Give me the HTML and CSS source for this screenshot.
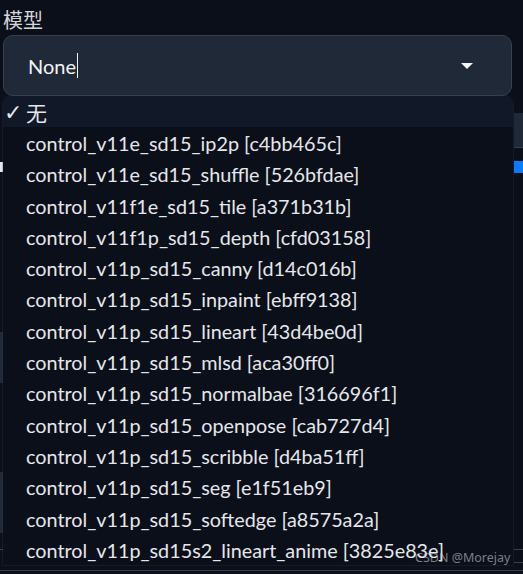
FILE: index.html
```html
<!DOCTYPE html>
<html lang="zh">
<head>
<meta charset="utf-8">
<link rel="stylesheet" href="styles.css">
</head>
<body>
<div class="page">
  <div class="field">
    <div class="label">模型</div>
    <div class="select">
      <span class="value">None</span><span class="caret"></span>
      <span class="arrow"></span>
    </div>
  </div>
  <div class="underlay">
    <div class="col col-left">
      <div class="u-check"></div>
      <div class="u-box u-box1"></div>
      <div class="u-box u-box2"></div>
      <div class="u-line u-line1"></div>
    </div>
    <div class="col col-right">
      <div class="u-rbox"></div>
      <div class="u-blue"></div>
      <div class="u-line u-rline1"></div>
      <div class="u-line u-rline2"></div>
    </div>
  </div>
  <div class="u-full-line"></div>

  <ul class="options">
    <li class="item selected"><span class="check">✓</span><span class="cjk">无</span></li>
    <li class="item"><span class="check">✓</span>control_v11e_sd15_ip2p [c4bb465c]</li>
    <li class="item"><span class="check">✓</span>control_v11e_sd15_shuffle [526bfdae]</li>
    <li class="item"><span class="check">✓</span>control_v11f1e_sd15_tile [a371b31b]</li>
    <li class="item"><span class="check">✓</span>control_v11f1p_sd15_depth [cfd03158]</li>
    <li class="item"><span class="check">✓</span>control_v11p_sd15_canny [d14c016b]</li>
    <li class="item"><span class="check">✓</span>control_v11p_sd15_inpaint [ebff9138]</li>
    <li class="item"><span class="check">✓</span>control_v11p_sd15_lineart [43d4be0d]</li>
    <li class="item"><span class="check">✓</span>control_v11p_sd15_mlsd [aca30ff0]</li>
    <li class="item"><span class="check">✓</span>control_v11p_sd15_normalbae [316696f1]</li>
    <li class="item"><span class="check">✓</span>control_v11p_sd15_openpose [cab727d4]</li>
    <li class="item"><span class="check">✓</span>control_v11p_sd15_scribble [d4ba51ff]</li>
    <li class="item"><span class="check">✓</span>control_v11p_sd15_seg [e1f51eb9]</li>
    <li class="item"><span class="check">✓</span>control_v11p_sd15_softedge [a8575a2a]</li>
    <li class="item"><span class="check">✓</span>control_v11p_sd15s2_lineart_anime [3825e83e]</li>
  </ul>

  <div class="watermark">CSDN @Morejay</div>
</div>
</body>
</html>
```
FILE: styles.css
```css
* { box-sizing: border-box; }
html, body {
  margin: 0;
  padding: 0;
  background: #0b0f19;
}
body {
  font-family: Lato, "Noto Sans CJK SC", sans-serif;
  color: #e5e7eb;
}
.page {
  position: relative;
  width: 523px;
  height: 574px;
  overflow: hidden;
}
.field {
  padding: 0 11px 0 3px;
}
.label {
  font-family: "Noto Sans CJK SC", sans-serif;
  font-size: 20px;
  line-height: 26px;
  height: 35px;
  padding-top: 7px;
  color: #d4d6da;
}
.select {
  height: 61px;
  border: 1px solid #374151;
  border-radius: 10px;
  background: #1f2937;
  display: flex;
  align-items: center;
  padding: 0 38px 0 24px;
  position: relative;
}
.value {
  font-size: 20px;
  color: #f3f4f6;
}
.caret {
  display: inline-block;
  width: 1px;
  height: 25px;
  background: #f3f4f6;
  margin-left: 1px;
}
.arrow {
  margin-left: auto;
  width: 0;
  height: 0;
  border-left: 6px solid transparent;
  border-right: 6px solid transparent;
  border-top: 6px solid #f3f4f6;
}
.underlay {
  display: flex;
  justify-content: space-between;
  height: 474px;
}
.col {
  display: flex;
  flex-direction: column;
}
.col-left { width: 4px; }
.col-right { width: 9px; }
.u-check {
  margin-top: 66px;
  width: 3px;
  height: 10px;
  background: #e5e7eb;
}
.u-box {
  width: 4px;
  background: #1f2937;
  border-right: 1px solid #374151;
}
.u-box1 { margin-top: 160px; height: 51px; }
.u-box2 { margin-top: 89px; height: 61px; }
.u-line {
  height: 1px;
  background: #374151;
}
.u-line1 { margin-top: 16px; }
.u-rbox {
  margin-top: 17px;
  height: 35px;
  background: #1f2937;
  border-bottom: 1px solid #374151;
}
.u-blue {
  margin-top: 13px;
  height: 12px;
  background: #0a7aff;
}
.u-rline1 { margin-top: 376px; }
.u-rline2 { margin-top: 12px; }
.u-full-line {
  height: 1px;
  background: #374151;
}
.options {
  position: absolute;
  top: 96px;
  left: 3px;
  width: 510px;
  margin: 0;
  padding: 0;
  list-style: none;
  background: #0b0f19;
  border-radius: 8px 8px 0 0;
  box-shadow: 0 0 0 1px rgba(55, 65, 81, 0.25);
}
.item {
  height: 31.3px;
  display: flex;
  align-items: center;
  font-size: 19.8px;
  white-space: nowrap;
  color: #e5e7eb;
}
.item.selected {
  background: #111827;
  border-radius: 8px 8px 0 0;
}
.check {
  width: 23px;
  padding-left: 1px;
  visibility: hidden;
  font-family: "DejaVu Sans", sans-serif;
  font-size: 22px;
  line-height: 1;
  margin-top: 2px;
}
.selected .check { visibility: visible; }
.cjk {
  font-family: "Noto Sans CJK SC", sans-serif;
  font-size: 21px;
  margin-left: 0;
}
.watermark {
  position: absolute;
  left: 415px;
  top: 549px;
  font-family: "Noto Sans", sans-serif;
  font-size: 12.5px;
  color: rgba(200, 205, 212, 0.6);
}
```
